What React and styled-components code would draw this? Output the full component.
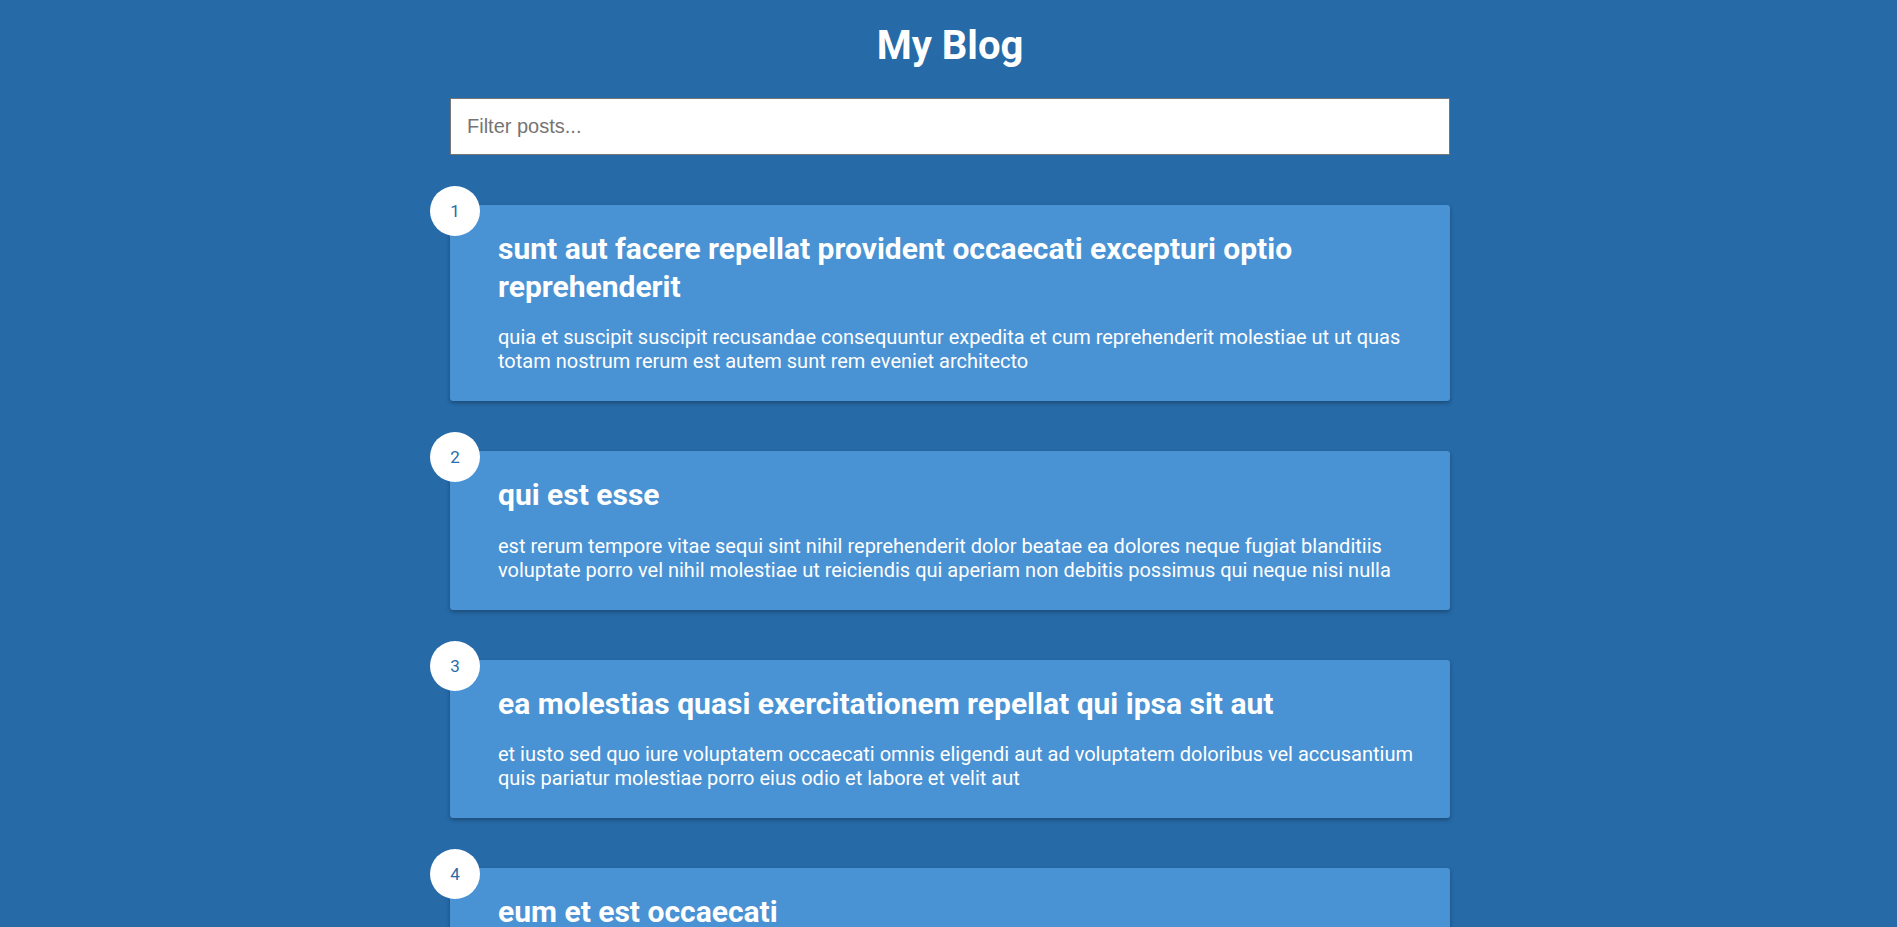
import React from "react";
import styled, { createGlobalStyle } from "styled-components";

const GlobalStyle = createGlobalStyle`
  * { box-sizing: border-box; }
  html, body { margin: 0; padding: 0; }
  body {
    background-color: #266aa8;
    color: #fff;
    font-family: Roboto, "Noto Sans", sans-serif;
  }
`;

const Page = styled.main`
  display: flex;
  flex-direction: column;
  align-items: center;
  padding: 22px 0 100px 3px;
  min-height: 100vh;
`;

const Title = styled.h1`
  margin: 0;
  font-size: 40px;
  font-weight: 700;
  text-align: center;
  line-height: normal;
`;

const FilterWrap = styled.div`
  margin-top: 29px;
  width: 1000px;
`;

const FilterInput = styled.input`
  display: block;
  width: 100%;
  padding: 16px;
  font-family: "Liberation Sans", Arial, sans-serif;
  font-size: 20px;
  line-height: 23px;
  border: 1px solid #767676;
  background: #fff;
  color: #333;
  outline: none;
  &::placeholder { color: #757575; }
`;

const PostList = styled.section`
  display: flex;
  flex-direction: column;
  gap: 50px;
  margin-top: 50px;
  width: 1000px;
`;

const Post = styled.article`
  position: relative;
  background-color: #4992d3;
  box-shadow: 0 2px 4px rgba(0, 0, 0, 0.3);
  border-radius: 3px;
  padding: 25px 30px 28px 48px;
`;

const Number = styled.div`
  position: absolute;
  top: -19px;
  left: -20px;
  width: 50px;
  height: 50px;
  border-radius: 50%;
  background: #fff;
  color: #296ca8;
  font-size: 17px;
  display: flex;
  align-items: center;
  justify-content: center;
`;

const PostTitle = styled.h2`
  margin: 0;
  font-size: 30px;
  font-weight: 700;
  line-height: 37.5px;
`;

const PostBody = styled.p`
  margin: 20px 0 0;
  font-size: 20px;
  line-height: 24px;
`;

const posts = [
  {
    id: 1,
    title: "sunt aut facere repellat provident occaecati excepturi optio reprehenderit",
    body: "quia et suscipit suscipit recusandae consequuntur expedita et cum reprehenderit molestiae ut ut quas totam nostrum rerum est autem sunt rem eveniet architecto",
  },
  {
    id: 2,
    title: "qui est esse",
    body: "est rerum tempore vitae sequi sint nihil reprehenderit dolor beatae ea dolores neque fugiat blanditiis voluptate porro vel nihil molestiae ut reiciendis qui aperiam non debitis possimus qui neque nisi nulla",
  },
  {
    id: 3,
    title: "ea molestias quasi exercitationem repellat qui ipsa sit aut",
    body: "et iusto sed quo iure voluptatem occaecati omnis eligendi aut ad voluptatem doloribus vel accusantium quis pariatur molestiae porro eius odio et labore et velit aut",
  },
  {
    id: 4,
    title: "eum et est occaecati",
    body: "ullam et saepe reiciendis voluptatem adipisci sit amet autem assumenda provident rerum culpa quis hic commodi nesciunt rem tenetur doloremque ipsam iure quis sunt voluptatem rerum illo velit",
  },
  {
    id: 5,
    title: "nesciunt quas odio",
    body: "repudiandae veniam quaerat sunt sed alias aut fugiat sit autem sed est voluptatem omnis possimus esse voluptatibus quis est aut tenetur dolor neque",
  },
];

export default function App() {
  return (
    <>
      <GlobalStyle />
      <Page>
        <Title>My Blog</Title>
        <FilterWrap>
          <FilterInput type="text" placeholder="Filter posts..." />
        </FilterWrap>
        <PostList>
          {posts.map((p) => (
            <Post key={p.id}>
              <Number>{p.id}</Number>
              <PostTitle>{p.title}</PostTitle>
              <PostBody>{p.body}</PostBody>
            </Post>
          ))}
        </PostList>
      </Page>
    </>
  );
}
